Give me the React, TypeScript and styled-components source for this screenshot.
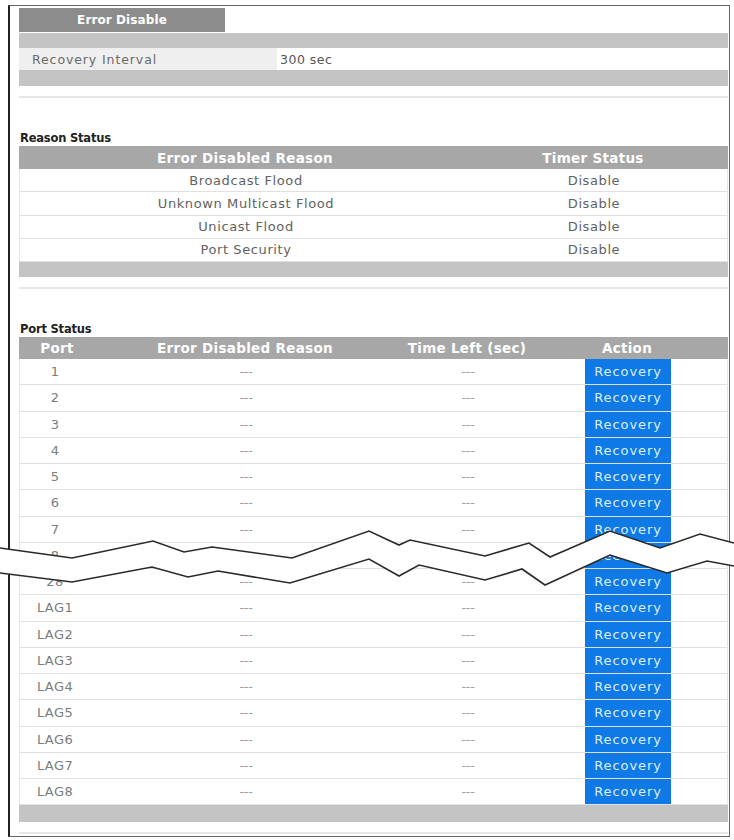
import React from 'react';
import styled, { createGlobalStyle } from 'styled-components';

const GlobalStyle = createGlobalStyle`
  html, body {
    margin: 0;
    padding: 0;
    background: #ffffff;
  }
  body {
    font-family: 'DejaVu Sans', 'Liberation Sans', sans-serif;
  }
`;

export const Page = styled.div`
  position: relative;
  width: 734px;
  height: 840px;
  overflow: hidden;
  background: #ffffff;
`;

export const Frame = styled.div`
  box-sizing: border-box;
  width: 722px;
  margin: 5px 0 0 8px;
  padding: 2px 1px 2px 9px;
  border: 1px solid #666666;
  border-left: 2px solid #222222;
`;

export const TabStrip = styled.div`
  display: flex;
  height: 24px;
`;

export const Tab = styled.div`
  width: 206px;
  display: flex;
  align-items: center;
  justify-content: center;
  background: #8c8c8c;
  color: #ffffff;
  font-weight: bold;
  font-size: 12px;
  letter-spacing: 0.1px;
`;

export const Bar = styled.div<{ $h: number; $top?: number }>`
  height: ${(p) => p.$h}px;
  margin-top: ${(p) => p.$top ?? 0}px;
  background: #c4c4c4;
`;

export const IntervalRow = styled.div`
  display: flex;
  height: 22px;
  align-items: stretch;
  font-size: 12.5px;
  letter-spacing: 0.9px;
  color: #6a6a6a;
`;

export const IntervalLabel = styled.div`
  width: 258px;
  padding-left: 13px;
  box-sizing: border-box;
  display: flex;
  align-items: center;
  background: #efefef;
`;

export const IntervalValue = styled.div`
  padding-left: 3px;
  display: flex;
  align-items: center;
  color: #555555;
  letter-spacing: 0.5px;
`;

export const Divider = styled.div`
  margin-top: 10px;
  height: 2px;
  background: #e6e6e6;
`;

export const SectionTitle = styled.div`
  padding-top: 32px;
  height: 16px;
  line-height: 16px;
  font-size: 11.5px;
  font-weight: bold;
  color: #222222;
  padding-left: 1px;
  letter-spacing: -0.2px;
`;

export const HeaderRow = styled.div<{ $cols: string; $h: number }>`
  display: grid;
  grid-template-columns: ${(p) => p.$cols};
  height: ${(p) => p.$h}px;
  background: #a7a7a7;
  color: #ffffff;
  font-weight: bold;
  font-size: 13.5px;
  letter-spacing: 0.3px;
`;

export const Row = styled.div<{ $cols: string; $h: number }>`
  display: grid;
  grid-template-columns: ${(p) => p.$cols};
  height: ${(p) => p.$h}px;
  box-sizing: border-box;
  border-bottom: 1px solid #e0e0e0;
  border-left: 1px solid #e6e6e6;
  border-right: 1px solid #e6e6e6;
  font-size: 13px;
  letter-spacing: 0.6px;
  color: #626262;
`;

export const Cell = styled.div<{ $muted?: boolean }>`
  display: flex;
  align-items: center;
  justify-content: center;
  white-space: nowrap;
  color: ${(p) => (p.$muted ? '#a0a0a0' : 'inherit')};
  font-size: ${(p) => (p.$muted ? '13px' : 'inherit')};
  letter-spacing: ${(p) => (p.$muted ? '-0.3px' : 'inherit')};
`;

export const PortCell = styled(Cell)`
  color: #7c7c7c;
  font-size: 13px;
  letter-spacing: 0.4px;
  padding-right: 6px;
`;

export const ActionCell = styled.div`
  display: flex;
  justify-content: center;
  align-items: stretch;
`;

export const RecoveryButton = styled.div`
  width: 86px;
  display: flex;
  align-items: center;
  justify-content: center;
  background: #0f79e6;
  color: #dcefff;
  font-size: 13px;
  letter-spacing: 0.9px;
`;

const BreakMark = styled.svg`
  position: absolute;
  left: 0;
  top: 0;
  pointer-events: none;
`;

const topLine =
  '0,548 72,558 153,541 184,552 212,547 292,558 369,531 399,545 410,540 485,556 529,543 550,557 610,531 660,548 700,534 734,543';
const bottomLine =
  '0,573 72,582 152,567 188,577 218,571 290,583 369,559 399,576 419,565 485,580 522,569 545,585 610,555 667,573 707,561 734,566';

const reasonCols = '452px 244px 1fr';
const portCols = '76px 300px 144px 176px 1fr';

const reasons = [
  'Broadcast Flood',
  'Unknown Multicast Flood',
  'Unicast Flood',
  'Port Security',
];

const ports = [
  '1', '2', '3', '4', '5', '6', '7', '8', '28',
  'LAG1', 'LAG2', 'LAG3', 'LAG4', 'LAG5', 'LAG6', 'LAG7', 'LAG8',
];

export default function App() {
  const bottomReversed = bottomLine.split(' ').reverse().join(' ');
  return (
    <Page>
      <GlobalStyle />
      <Frame>
        <TabStrip>
          <Tab>Error Disable</Tab>
        </TabStrip>
        <Bar $h={15} $top={1} />
        <IntervalRow>
          <IntervalLabel>Recovery Interval</IntervalLabel>
          <IntervalValue>300 sec</IntervalValue>
        </IntervalRow>
        <Bar $h={16} />
        <Divider />

        <SectionTitle>Reason Status</SectionTitle>
        <HeaderRow $cols={reasonCols} $h={23}>
          <Cell>Error Disabled Reason</Cell>
          <Cell>Timer Status</Cell>
          <div />
        </HeaderRow>
        {reasons.map((r) => (
          <Row key={r} $cols={reasonCols} $h={23.25}>
            <Cell>{r}</Cell>
            <Cell>Disable</Cell>
            <div />
          </Row>
        ))}
        <Bar $h={15} />
        <Divider />

        <SectionTitle>Port Status</SectionTitle>
        <HeaderRow $cols={portCols} $h={22}>
          <Cell>Port</Cell>
          <Cell>Error Disabled Reason</Cell>
          <Cell>Time Left (sec)</Cell>
          <Cell>Action</Cell>
          <div />
        </HeaderRow>
        {ports.map((p) => (
          <Row key={p} $cols={portCols} $h={26.25}>
            <PortCell>{p}</PortCell>
            <Cell $muted>---</Cell>
            <Cell $muted>---</Cell>
            <ActionCell>
              <RecoveryButton>Recovery</RecoveryButton>
            </ActionCell>
            <div />
          </Row>
        ))}
        <Bar $h={17} />
        <Divider />
      </Frame>

      <BreakMark width={734} height={840} viewBox="0 0 734 840">
        <polygon points={`${topLine} ${bottomReversed}`} fill="#ffffff" />
        <polyline points={topLine} fill="none" stroke="#2a2a2a" strokeWidth={1.6} />
        <polyline points={bottomLine} fill="none" stroke="#2a2a2a" strokeWidth={1.6} />
      </BreakMark>
    </Page>
  );
}
